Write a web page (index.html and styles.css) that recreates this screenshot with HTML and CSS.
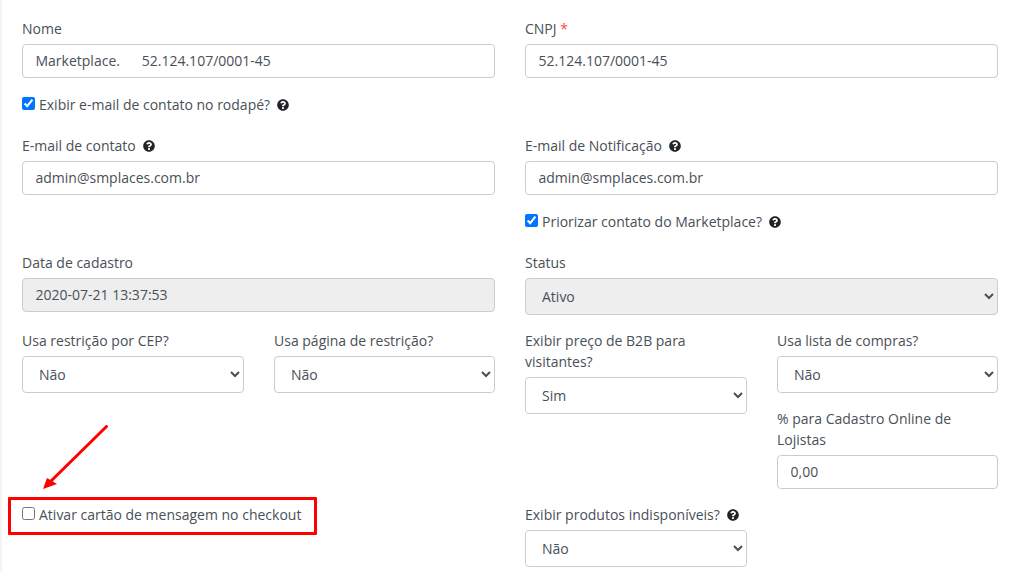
FILE: index.html
```html
<!DOCTYPE html>
<html lang="pt-BR">
<head>
<meta charset="utf-8">
<title>Marketplace</title>
<link rel="stylesheet" href="styles.css">
</head>
<body>
<svg class="defs" width="0" height="0" aria-hidden="true"><defs><symbol id="q" viewBox="0 0 512 512"><path d="M504 256c0 136.997-111.043 248-248 248S8 392.997 8 256C8 119.083 119.043 8 256 8s248 111.083 248 248zM262.655 90c-54.497 0-89.255 22.957-116.549 63.758-3.536 5.286-2.353 12.415 2.715 16.258l34.699 26.31c5.205 3.947 12.621 3.008 16.665-2.122 17.864-22.658 30.113-35.797 57.303-35.797 20.429 0 45.698 13.148 45.698 32.958 0 14.976-12.363 22.667-32.534 33.976C247.128 238.528 216 254.941 216 296v4c0 6.627 5.373 12 12 12h56c6.627 0 12-5.373 12-12v-1.333c0-28.462 83.186-29.647 83.186-106.667 0-58.002-60.165-102-116.531-102zM256 338c-25.365 0-46 20.635-46 46 0 25.364 20.635 46 46 46s46-20.636 46-46c0-25.365-20.635-46-46-46z"/></symbol></defs></svg>
<form class="form">
  <div class="row">
    <div class="group"><label class="lbl">Nome</label><input class="ctl" value="Marketplace.      52.124.107/0001-45"></div>
    <div class="group"><label class="lbl">CNPJ <span class="req">*</span></label><input class="ctl" value="52.124.107/0001-45"></div>
  </div>
  <div class="row">
    <label class="chk"><input type="checkbox" checked>Exibir e-mail de contato no rodapé? <svg class="q q-chk"><use href="#q"/></svg></label>
  </div>
  <div class="row">
    <div class="group flush"><label class="lbl">E-mail de contato <svg class="q"><use href="#q"/></svg></label><input class="ctl" value="admin@smplaces.com.br"></div>
    <div class="group flush"><label class="lbl">E-mail de Notificação <svg class="q q-tight"><use href="#q"/></svg></label><input class="ctl" value="admin@smplaces.com.br"></div>
  </div>
  <div class="row">
    <div></div>
    <label class="chk chk-top"><input type="checkbox" checked>Priorizar contato do Marketplace? <svg class="q q-chk"><use href="#q"/></svg></label>
  </div>
  <div class="row">
    <div class="group"><label class="lbl">Data de cadastro</label><input class="ctl" value="2020-07-21 13:37:53" disabled></div>
    <div class="group"><label class="lbl">Status</label><select class="ctl sel" disabled><option>Ativo</option></select></div>
  </div>
  <div class="row">
    <div class="sub">
      <div class="group"><label class="lbl">Usa restrição por CEP?</label><select class="ctl sel"><option>Não</option></select></div>
      <div class="group"><label class="lbl">Usa página de restrição?</label><select class="ctl sel"><option>Não</option></select></div>
    </div>
    <div class="sub">
      <div class="group"><label class="lbl">Exibir preço de B2B para visitantes?</label><select class="ctl sel"><option>Sim</option></select></div>
      <div>
        <div class="group"><label class="lbl">Usa lista de compras?</label><select class="ctl sel"><option>Não</option></select></div>
        <div class="group"><label class="lbl">% para Cadastro Online de Lojistas</label><input class="ctl" value="0,00"></div>
      </div>
    </div>
  </div>
  <div class="row">
    <label class="chk chk-plain"><input type="checkbox">Ativar cartão de mensagem no checkout</label>
    <div class="sub">
      <div class="group"><label class="lbl">Exibir produtos indisponíveis? <svg class="q"><use href="#q"/></svg></label><select class="ctl sel"><option>Não</option></select></div>
    </div>
  </div>
</form>
<div class="redbox"></div>
<svg class="arrow" width="120" height="90" viewBox="0 0 120 90" aria-hidden="true">
  <line x1="106.500" y1="1.500" x2="50" y2="57" class="arrow-line"/>
  <polygon points="43,64 47,53 57,59" class="arrow-head"/>
</svg>
</body>
</html>
```
FILE: styles.css
```css
html, body { margin: 0; padding: 0; }
body {
  background: #fff;
  color: #495057;
  font: 14px/21px "Open Sans", sans-serif;
  height: 572px;
  overflow: hidden;
  position: relative;
  border-left: 2px solid #f4f4f4;
  box-sizing: border-box;
}
.defs { position: absolute; }
.form { padding: 18px 13px 0 20px; }
.row { display: grid; grid-template-columns: 473px 473px; column-gap: 30px; }
.sub { display: grid; grid-template-columns: 222px 221px; column-gap: 30px; align-items: start; }
.group { margin-bottom: 15px; min-width: 0; }
.group.flush { margin-bottom: 0; }
.lbl { display: block; margin-bottom: 5px; color: #495057; }
.req { color: #f44; }
.ctl {
  display: block;
  box-sizing: border-box;
  width: 100%;
  height: 34px;
  padding: 0 12.500px 1px;
  border: 1px solid #ccc;
  border-radius: 4px;
  background: #fff;
  color: #495057;
  font: 14px/21px "Open Sans", sans-serif;
  white-space: pre;
}
.ctl:disabled { background: #eee; opacity: 1; color: #495057; }
.sel { height: 37px; padding: 0 8px 0 12px; }
.chk { display: block; margin: 1px 0 20px; height: 21px; }
.chk input { margin: 0 4px 0 0; width: 13px; height: 13px; vertical-align: 0; accent-color: #0075ff; }
.chk-top { margin-top: 16px; }
.chk-plain { margin: 0; }
.q { width: 12px; height: 12px; fill: #212529; vertical-align: -1px; margin-left: 4px; }
.q-chk { margin-left: 3px; }
.q-tight { margin-left: 3px; }
.redbox {
  position: absolute;
  left: 6px;
  top: 497px;
  width: 309px;
  height: 38px;
  box-sizing: border-box;
  border: 3px solid #f00;
  border-radius: 1px;
}
.arrow { position: absolute; left: -2px; top: 425px; }
.arrow-line { stroke: #f00; stroke-width: 3; stroke-linecap: round; }
.arrow-head { fill: #f00; }
```
